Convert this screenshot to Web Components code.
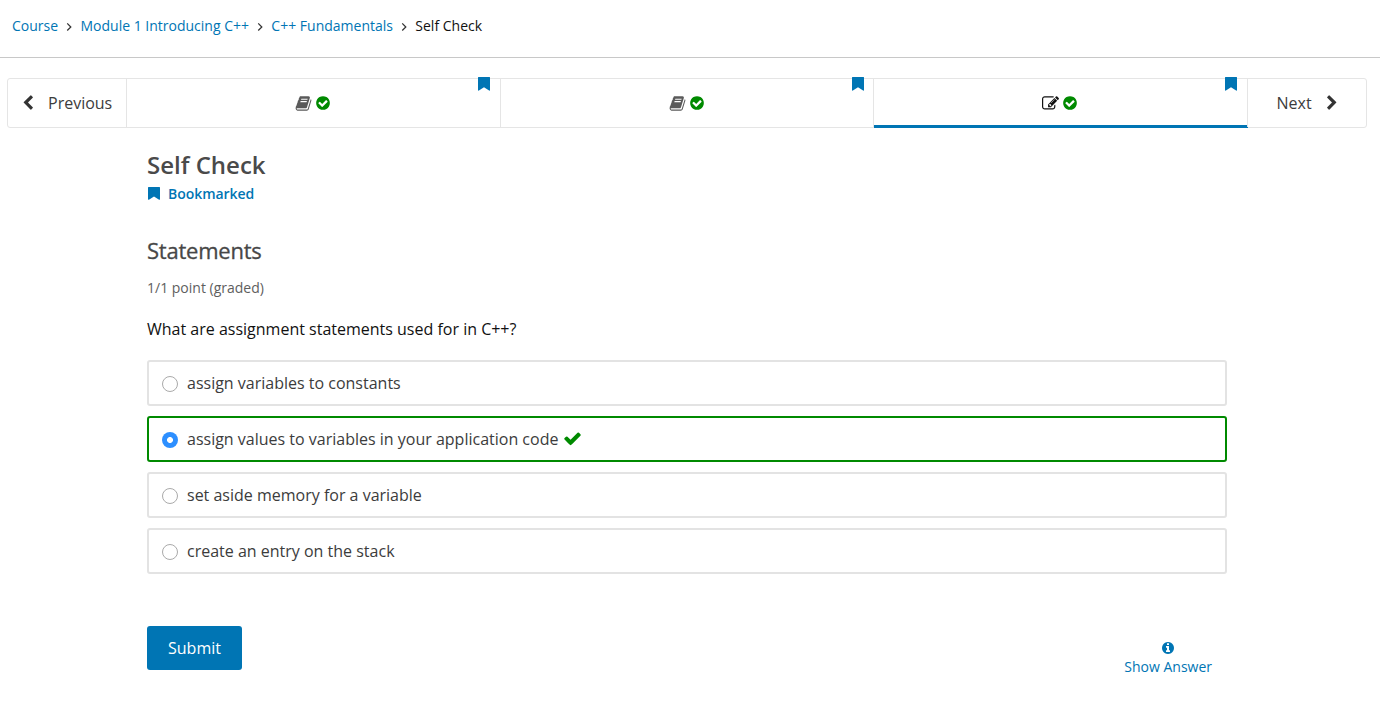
<!DOCTYPE html>
<html lang="en">
<head>
<meta charset="utf-8">
<title>Self Check</title>
<style>
body{margin:0;background:#fff;font-family:"Open Sans",sans-serif;font-size:16px;color:#3c3c3c}
</style>
</head>
<body>
<course-page></course-page>
<script>
const define=(name,html,setup)=>{
  const t=document.createElement('template');t.innerHTML=html;
  customElements.define(name,class extends HTMLElement{
    constructor(){super();this.attachShadow({mode:'open'}).append(t.content.cloneNode(true));}
    connectedCallback(){if(setup)setup(this,this.shadowRoot);}
  });
};
const paths={
  'check-circle':'M1412 734q0-28-18-46l-91-90q-19-19-45-19t-45 19l-408 407-226-226q-19-19-45-19t-45 19l-91 90q-18 18-18 46 0 27 18 45l362 362q19 19 45 19 27 0 46-19l543-543q18-18 18-45zm252 162q0 209-103 385.5t-279.5 279.5-385.5 103-385.5-103-279.5-279.5-103-385.5 103-385.5 279.5-279.5 385.5-103 385.5 103 279.5 279.5 103 385.5z',
  'check':'M1671 566q0 40-28 68l-724 724-136 136q-28 28-68 28t-68-28l-136-136-362-362q-28-28-28-68t28-68l136-136q28-28 68-28t68 28l294 295 656-657q28-28 68-28t68 28l136 136q28 28 28 68z',
  'info':'M1152 1376v-160q0-14-9-23t-23-9h-96v-512q0-14-9-23t-23-9h-320q-14 0-23 9t-9 23v160q0 14 9 23t23 9h96v320h-96q-14 0-23 9t-9 23v160q0 14 9 23t23 9h448q14 0 23-9t9-23zm-128-896v-160q0-14-9-23t-23-9h-192q-14 0-23 9t-9 23v160q0 14 9 23t23 9h192q14 0 23-9t9-23zm640 416q0 209-103 385.5t-279.5 279.5-385.5 103-385.5-103-279.5-279.5-103-385.5 103-385.5 279.5-279.5 385.5-103 385.5 103 279.5 279.5 103 385.5z',
  'left':'M1427 301l-531 531 531 531q19 19 19 45t-19 45l-166 166q-19 19-45 19t-45-19l-742-742q-19-19-19-45t19-45l742-742q19-19 45-19t45 19l166 166q19 19 19 45t-19 45z',
  'right':'M365 301l531 531-531 531q-19 19-19 45t19 45l166 166q19 19 45 19t45-19l742-742q19-19 19-45t-19-45l-742-742q-19-19-45-19t-45 19l-166 166q-19 19-19 45t19 45z',
  'edit':'M888 1184l116-116-152-152-116 116v56h96v96h56zm440-720q-16-16-33 1l-350 350q-17 17-1 33t33-1l350-350q17-17 1-33zm80 594v190q0 119-84.5 203.5t-203.5 84.5h-832q-119 0-203.5-84.5t-84.5-203.5v-832q0-119 84.5-203.5t203.5-84.5h832q63 0 117 25 15 7 18 23 3 17-9 29l-49 49q-14 14-32 8-23-6-45-6h-832q-66 0-113 47t-47 113v832q0 66 47 113t113 47h832q66 0 113-47t47-113v-126q0-13 9-22l64-64q15-15 35-7t20 29zm-96-738l288 288-672 672h-288v-288zm444 132l-92 92-288-288 92-92q28-28 68-28t68 28l152 152q28 28 28 68t-28 68z',
  'book':'M1703 478q40 57 18 129l-275 906q-19 64-76.5 107.5t-122.5 43.5h-923q-77 0-148.5-53.5t-99.5-131.5q-24-67-2-127 0-4 3-27t4-37q1-8-3-21.5t-3-19.5q2-11 8-21t16.5-23.5 16.5-23.5q23-38 45-91.5t30-91.5q3-10 .5-30t-.5-28q3-11 17-28t17-23q21-36 42-92t25-90q1-9-2.5-32t.5-28q4-13 22-30.5t22-22.5q19-26 42.5-84.5t27.5-96.5q1-8-3-25.5t-2-26.5q2-8 9-18t18-23 17-21q8-12 16.5-30.5t15-35 16-36 19.5-32 26.5-23.5 36-11.5 47.5 5.5l-1 3q38-9 51-9h761q74 0 114 56t18 130l-274 906q-36 119-71.5 153.5t-128.5 34.5h-869q-27 0-38 15-11 16-1 43 24 70 144 70h923q29 0 56-15.5t35-41.5l300-987q7-22 5-57 38 15 59 43zm-1064 2q-4 13 2 22.5t20 9.5h608q13 0 25.5-9.5t16.5-22.5l21-64q4-13-2-22.5t-20-9.5h-608q-13 0-25.5 9.5t-16.5 22.5zm-83 256q-4 13 2 22.5t20 9.5h608q13 0 25.5-9.5t16.5-22.5l21-64q4-13-2-22.5t-20-9.5h-608q-13 0-25.5 9.5t-16.5 22.5z',
  'angle':'M500 330L660 170L1380 890L660 1610L500 1450L1060 890Z'
};
define('ui-icon',`<style>:host{display:inline-block;width:var(--s,16px);height:var(--s,16px);flex:none}svg{display:block;width:100%;height:100%;fill:currentColor}</style><svg viewBox="0 0 1792 1792"><path/></svg>`,
  (h,r)=>r.querySelector('path').setAttribute('d',paths[h.getAttribute('name')]));

define('bookmark-flag',`<style>:host{display:block;width:12px;height:14px;color:#0075b4}svg{display:block;width:100%;height:100%}</style><svg viewBox="0 0 12 14" preserveAspectRatio="none"><path fill="currentColor" d="M.5 0h11q.5 0 .5.5V13.2q0 .7-.9.4L6 10.2 .9 13.6Q0 13.9 0 13.2V.5Q0 0 .5 0z"/></svg>`);

define('bread-crumbs',`<style>
:host{display:flex;align-items:center;box-sizing:border-box;padding:0 12px 5px;border-bottom:1px solid #c8c8c8;height:58px;font-size:14px;line-height:20px;color:#0075b4;white-space:nowrap}
ui-icon{--s:10px;color:#333;margin:2px 6.2px 0 6.2px}b{font-weight:400;color:#111}
</style><span>Course</span><ui-icon name="angle"></ui-icon><span>Module 1 Introducing C++</span><ui-icon name="angle"></ui-icon><span>C++ Fundamentals</span><ui-icon name="angle"></ui-icon><b>Self Check</b>`);

define('sequence-tab',`<style>
:host{display:flex;flex:1;position:relative;align-items:center;justify-content:center;gap:3px;border-right:1px solid #e5e5e5;color:#5a5a5a}
:host([active]){color:#111;box-shadow:inset 0 -2px #0075b4,0 1px #0075b4}
ui-icon{--s:17px}.done{--s:16px;color:#008a00}
bookmark-flag{position:absolute;top:-2px;right:9.2px}
</style><ui-icon class="kind"></ui-icon><ui-icon class="done" name="check-circle"></ui-icon><bookmark-flag></bookmark-flag>`);

define('sequence-nav',`<style>
:host{display:flex;box-sizing:border-box;height:50px;margin:20px 13px 0 7px;border:1px solid #e5e5e5;border-radius:3px}
.b{display:flex;align-items:center;box-sizing:border-box;width:119px;white-space:nowrap}
.prev{border-right:1px solid #e5e5e5;padding-left:12px;gap:12px}.next{width:118.5px;padding-left:29px;gap:12px}
.b ui-icon{color:#333}
</style><div class="b prev"><ui-icon name="left"></ui-icon><span>Previous</span></div><slot></slot><div class="b next"><span>Next</span><ui-icon name="right"></ui-icon></div>`);

define('answer-choice',`<style>
:host{display:flex;align-items:center;box-sizing:border-box;height:46px;border:2px solid #e3e3e3;border-radius:3px;padding-left:13px;margin-bottom:10px;line-height:24px}
:host([checked]){border-color:#008a00}
i{box-sizing:border-box;width:16px;height:16px;border:1px solid #aaa;border-radius:50%;margin:2px 9px 0 0}
:host([checked]) i{border:0;background:radial-gradient(circle,#fff 2.6px,#2d8fff 3.3px)}
ui-icon{display:none;--s:19px;color:#008a00;margin:-1px 0 0 5px}:host([checked]) ui-icon{display:block}
</style><i></i><span><slot></slot></span><ui-icon name="check"></ui-icon>`);

define('problem-block',`<style>
:host{display:block;width:1080px;margin-left:147px;padding-top:20px}
h2{margin:0;font-size:24px;line-height:34px;font-weight:600;color:#4a4a4a}
.bm{display:flex;align-items:center;gap:8px;height:20px;margin:1px 0 0 1px;font-size:14px;font-weight:600;color:#0075b4;letter-spacing:-.05px}
.bm bookmark-flag{width:12px;height:13px}
h3{margin:31px 0 0;font-size:22px;line-height:32px;font-weight:400;color:#474747;letter-spacing:-.23px;-webkit-text-stroke:.3px #474747}
.pts{margin-top:12px;font-size:14px;line-height:20px;color:#5e5e5e}
p{margin:19px 0;line-height:24px;color:#111}
.actions{display:flex;justify-content:space-between;margin-top:52px}
button{width:95px;height:44px;border:0;border-radius:3px;background:#0075b4;color:#fff;font:inherit}
.show{display:flex;flex-direction:column;align-items:center;margin:15px 15px 0 0;font-size:14px;line-height:20px;color:#0075b4}
.show ui-icon{--s:14px;margin-bottom:2px}
</style><h2>Self Check</h2><div class="bm"><bookmark-flag></bookmark-flag><span>Bookmarked</span></div>
<h3>Statements</h3><div class="pts">1/1 point (graded)</div><p>What are assignment statements used for in C++?</p>
<slot></slot>
<div class="actions"><button>Submit</button><div class="show"><ui-icon name="info"></ui-icon><span>Show Answer</span></div></div>`);

define('course-page',`<style>:host{display:block;height:705px;overflow:hidden}</style>
<bread-crumbs></bread-crumbs>
<sequence-nav></sequence-nav>
<problem-block>
<answer-choice>assign variables to constants</answer-choice>
<answer-choice checked>assign values to variables in your application code</answer-choice>
<answer-choice>set aside memory for a variable</answer-choice>
<answer-choice>create an entry on the stack</answer-choice>
</problem-block>`,(h,r)=>{
  const nav=r.querySelector('sequence-nav');
  ['book','book','edit'].forEach(kind=>{
    const tab=document.createElement('sequence-tab');
    const icon=tab.shadowRoot.querySelector('.kind');
    icon.setAttribute('name',kind);
    if(kind==='edit')tab.setAttribute('active','');
    nav.append(tab);
  });
});
</script>
</body>
</html>
